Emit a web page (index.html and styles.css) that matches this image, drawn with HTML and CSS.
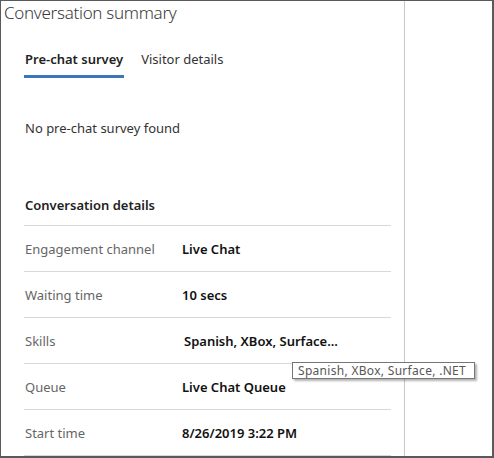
FILE: index.html
```html
<!DOCTYPE html>
<html>
<head>
<meta charset="utf-8">
<link rel="stylesheet" href="styles.css">
</head>
<body>
<div class="frame">
  <div class="main">
    <div class="title">Conversation summary</div>
    <div class="content">
      <div class="tabs">
        <div class="tab active">Pre-chat survey</div>
        <div class="tab">Visitor details</div>
      </div>
      <div class="empty">No pre-chat survey found</div>
      <div class="section-title">Conversation details</div>
      <div class="row"><span class="label">Engagement channel</span><span class="value">Live Chat</span></div>
      <div class="row"><span class="label">Waiting time</span><span class="value">10 secs</span></div>
      <div class="row"><span class="label">Skills</span><span class="value skills">Spanish, XBox, Surface...</span></div>
      <div class="row"><span class="label">Queue</span><span class="value">Live Chat Queue</span></div>
      <div class="row"><span class="label">Start time</span><span class="value">8/26/2019 3:22 PM</span></div>
    </div>
  </div>
  <div class="side"></div>
  <div class="tooltip">Spanish, XBox, Surface, .NET</div>
</div>
</body>
</html>
```
FILE: styles.css
```css
* { box-sizing: border-box; }
html, body { margin: 0; padding: 0; background: #fff; }
body { font-family: "Segoe UI", "Noto Sans", "Open Sans", sans-serif; }
.frame {
  position: relative;
  width: 494px;
  height: 458px;
  border: 1px solid #5a5a5a;
  border-right-width: 2px;
  border-bottom-width: 2px;
  display: flex;
  overflow: hidden;
}
.main {
  width: 404px;
  border-right: 1px solid #c8c8c8;
  flex: none;
}
.side { flex: 1; }
.title {
  font-size: 17px;
  letter-spacing: -0.3px;
  line-height: 24px;
  font-weight: 300;
  color: #3a3a3a;
  padding-left: 3px;
}
.content {
  padding: 24px 13px 0 23px;
}
.tabs { display: flex; gap: 16px; }
.tab {
  font-size: 13px;
  line-height: 20px;
  padding: 0 1px 6px;
  color: #333;
  border-bottom: 3px solid transparent;
}
.tab.active {
  font-weight: 600;
  color: #222;
  border-bottom-color: #3b77b6;
}
.empty {
  margin-top: 40px;
  font-size: 13px;
  line-height: 20px;
  color: #333;
  padding-left: 1px;
}
.section-title {
  margin-top: 57px;
  font-size: 13px;
  line-height: 20px;
  font-weight: 600;
  color: #222;
  padding: 0 0 10px 1px;
  border-bottom: 1px solid #d8d8d8;
}
.row {
  display: flex;
  align-items: center;
  height: 46px;
  border-bottom: 1px solid #d8d8d8;
  font-size: 13px;
  padding-left: 1px;
}
.label { width: 157px; color: #666; }
.value { font-weight: 600; color: #111; }
.skills { margin-left: 2px; }
.tooltip {
  position: absolute;
  left: 291px;
  top: 361px;
  width: 183px;
  height: 17px;
  border: 1px solid #767676;
  background: #fff;
  box-shadow: 2px 2px 2px rgba(0,0,0,0.3);
  font-size: 12px;
  letter-spacing: 0.3px;
  line-height: 15px;
  color: #575757;
  padding-left: 5px;
  white-space: nowrap;
}
```
